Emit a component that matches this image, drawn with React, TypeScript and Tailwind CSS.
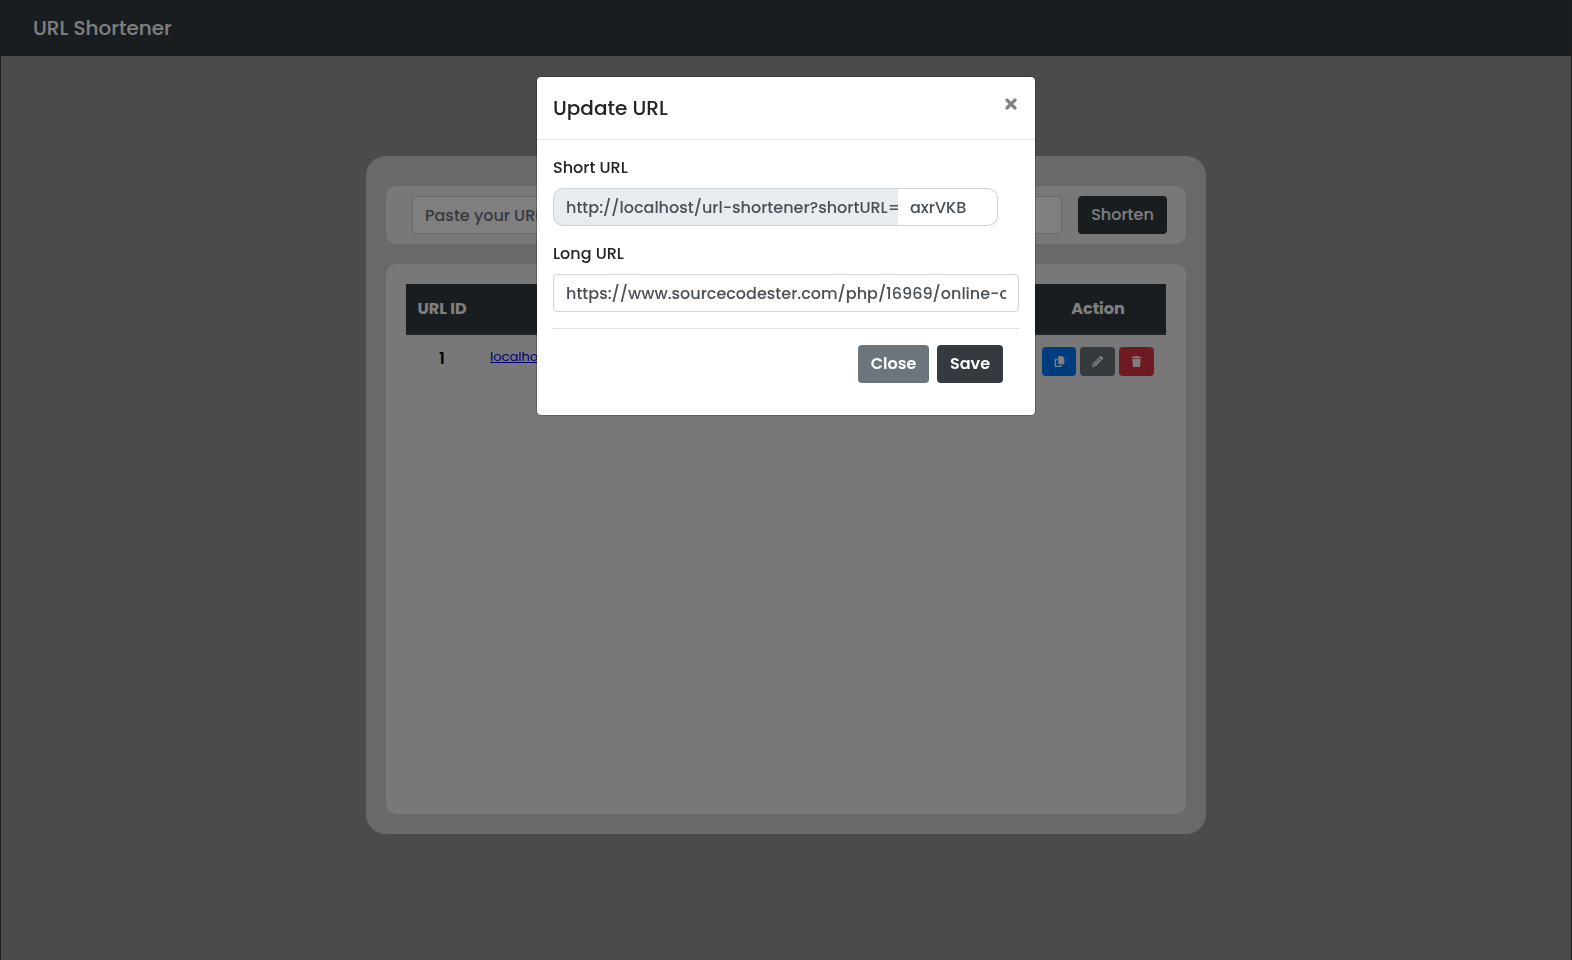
import React from 'react';
import { FaCopy, FaPencil, FaTrash, FaXmark } from 'react-icons/fa6';

interface ShortUrl {
    id: number;
    short: string;
}

const urls: ShortUrl[] = [
    { id: 1, short: 'localhost' },
];

const Navbar: React.FC = () => (
    <nav className="flex h-14 items-center bg-[#343a40] px-8">
        <a href="#" className="text-[20px] leading-[30px] font-medium text-white">URL Shortener</a>
    </nav>
);

const ShortenForm: React.FC = () => (
    <form className="flex items-center gap-4 rounded-[10px] bg-[#f1f1f1] py-[10px] pr-[19px] pl-[26px]">
        <input
            type="text"
            aria-label="Long URL to shorten"
            placeholder="Paste your URL"
            className="h-[38px] min-w-0 flex-1 rounded border border-[#ced4da] bg-white px-3 text-[16px] font-medium placeholder:text-[#6c757d]"
        />
        <button type="button" className="h-[38px] w-[89px] rounded bg-[#343a40] text-[16px] font-medium text-white">
            Shorten
        </button>
    </form>
);

const UrlTable: React.FC = () => (
    <div className="mt-5 min-h-[550px] rounded-[10px] bg-[#f1f1f1] p-5">
        <table className="w-full table-fixed border-collapse">
            <thead>
                <tr className="h-[50px] border-b-2 border-[#454d55] bg-[#343a40] text-[16px] text-white">
                    <th className="w-[72px] font-bold whitespace-nowrap">URL ID</th>
                    <th></th>
                    <th className="w-[136px] font-bold">Action</th>
                </tr>
            </thead>
            <tbody>
                {urls.map((url) => (
                    <tr key={url.id} className="align-top text-[#212529]">
                        <th className="pt-3 text-[16px] leading-6 font-semibold text-black">{url.id}</th>
                        <td className="px-3 pt-3 text-[13px] leading-5">
                            <a href="#" className="text-[#0000ee] underline">{url.short}</a>
                        </td>
                        <td className="pt-3">
                            <div className="flex justify-end gap-1 pr-3 text-[11px] text-white">
                                <button type="button" aria-label="Copy" className="flex h-[29px] w-[34px] items-center justify-center rounded bg-[#007bff]">
                                    <FaCopy />
                                </button>
                                <button type="button" aria-label="Edit" className="flex h-[29px] w-[35px] items-center justify-center rounded bg-[#6c757d]">
                                    <FaPencil />
                                </button>
                                <button type="button" aria-label="Delete" className="flex h-[29px] w-[35px] items-center justify-center rounded bg-[#dc3545]">
                                    <FaTrash />
                                </button>
                            </div>
                        </td>
                    </tr>
                ))}
            </tbody>
        </table>
    </div>
);

const UpdateModal: React.FC = () => (
    <div className="fixed inset-0 flex items-start justify-center bg-black/50 pt-[76px] font-medium">
        <div role="dialog" aria-labelledby="updateTitle" className="w-[500px] rounded-[5px] border border-black/20 bg-white bg-clip-padding text-[#212529] antialiased will-change-transform">
            <div className="flex items-start justify-between border-b border-[#dee2e6] p-4">
                <h5 id="updateTitle" className="text-[20px] leading-[30px] font-medium">Update URL</h5>
                <button type="button" aria-label="Close dialog" className="flex h-[22px] w-4 items-center justify-center text-[16px] text-[#7f7f7f]">
                    <FaXmark strokeWidth={40} stroke="currentColor" />
                </button>
            </div>
            <form className="p-4">
                <label htmlFor="shortUrl" className="mb-2 block text-[16px] leading-6">Short URL</label>
                <div className="mb-4 flex w-[445px]">
                    <input
                        type="text"
                        readOnly
                        aria-label="Short URL prefix"
                        value="http://localhost/url-shortener?shortURL="
                        className="h-[38px] min-w-0 flex-1 rounded-l-[10px] border border-r-0 border-[#ced4da] bg-[#e9ecef] pl-3 text-[16px] text-[#495057]"
                    />
                    <input
                        id="shortUrl"
                        type="text"
                        defaultValue="axrVKB"
                        className="h-[38px] w-[100px] rounded-r-[10px] border border-l-0 border-[#ced4da] bg-white px-3 text-[16px] text-[#495057]"
                    />
                </div>
                <label htmlFor="longUrl" className="mb-2 block text-[16px] leading-6">Long URL</label>
                <input
                    id="longUrl"
                    type="text"
                    defaultValue="https://www.sourcecodester.com/php/16969/online-c"
                    className="h-[38px] w-full rounded border border-[#ced4da] px-3 text-[16px] text-[#495057]"
                />
                <div className="mt-4 flex justify-end gap-2 border-t border-[#dee2e6] p-4 font-semibold text-white">
                    <button type="button" className="h-[38px] w-[71px] rounded bg-[#6c757d] text-[16px]">Close</button>
                    <button type="button" className="h-[38px] w-[66px] rounded bg-[#343a40] text-[16px]">Save</button>
                </div>
            </form>
        </div>
    </div>
);

const App: React.FC = () => {
    return (
        <div className="min-h-screen border-x border-[#3a3a3a] bg-[#969696] font-['Poppins','Inter',sans-serif]">
            <Navbar />
            <main className="mx-auto mt-[100px] w-full max-w-[840px] rounded-[20px] bg-[#d3d3d3] px-5 pt-[30px] pb-5">
                <ShortenForm />
                <UrlTable />
            </main>
            <UpdateModal />
        </div>
    );
};

export default App;
